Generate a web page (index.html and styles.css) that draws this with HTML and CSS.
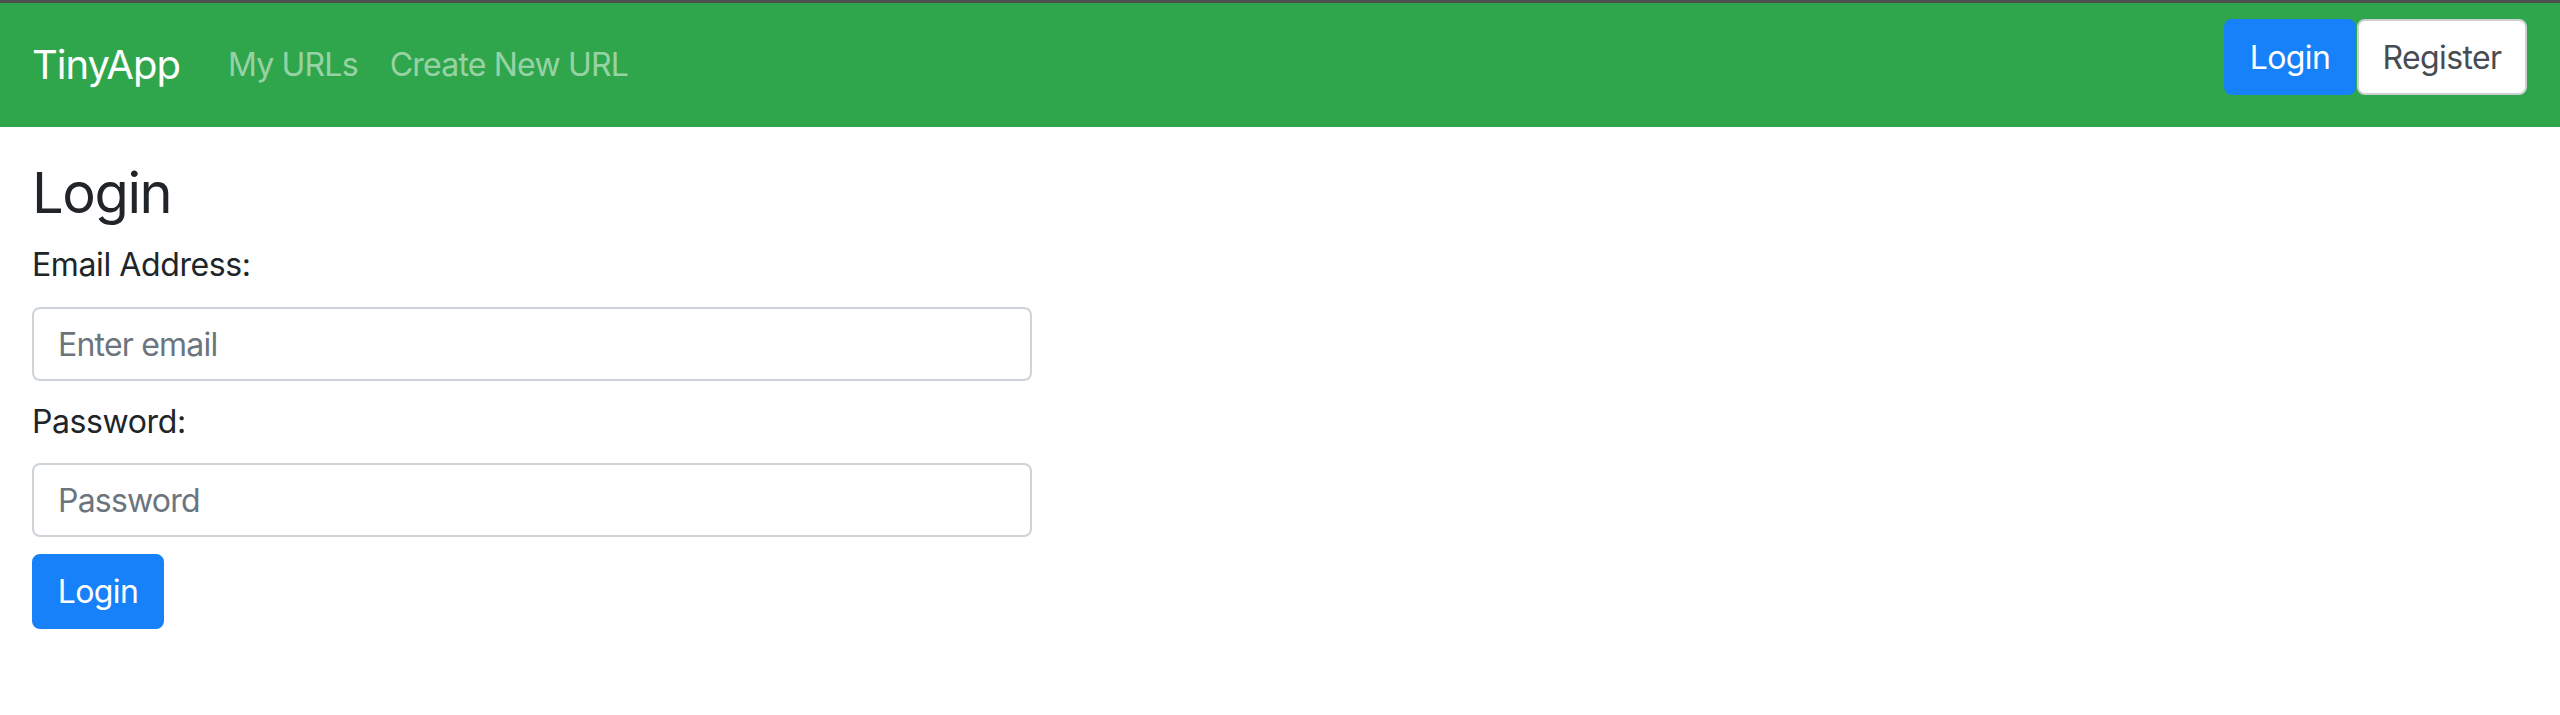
FILE: index.html
```html
<!DOCTYPE html>
<html lang="en">
<head>
<meta charset="utf-8">
<title>TinyApp - Login</title>
<link rel="stylesheet" href="styles.css">
</head>
<body>
<nav class="navbar">
  <a class="brand" href="#">TinyApp</a>
  <div class="nav-links">
    <a class="nav-link" href="#">My URLs</a>
    <a class="nav-link" href="#">Create New URL</a>
  </div>
  <div class="nav-actions">
    <a class="btn btn-primary btn-nav-login" href="#">Login</a>
    <a class="btn btn-light btn-nav-register" href="#">Register</a>
  </div>
</nav>
<main class="content">
  <h1 class="title">Login</h1>
  <form class="login-form">
    <label class="field-label" for="email">Email Address:</label>
    <input class="field-input" id="email" type="email" placeholder="Enter email">
    <label class="field-label field-label-second" for="password">Password:</label>
    <input class="field-input" id="password" type="password" placeholder="Password">
    <button class="btn btn-primary btn-submit" type="submit">Login</button>
  </form>
</main>
</body>
</html>
```
FILE: styles.css
```css
html, body {
  margin: 0;
  padding: 0;
  background: #ffffff;
}
body {
  font-family: Inter, "Liberation Sans", sans-serif;
  color: #212529;
  letter-spacing: -0.025em;
}
a { text-decoration: none; }

.navbar {
  box-sizing: border-box;
  height: 127px;
  border-top: 3px solid #4f4f4f;
  background: #2fa64b;
  display: flex;
  align-items: center;
  padding: 0 33px 0 32px;
}
.brand {
  font-size: 40px;
  color: #ffffff;
  margin-right: 32px;
  line-height: 1;
  letter-spacing: -0.025em;
}
.nav-links {
  display: flex;
}
.nav-link {
  font-size: 32px;
  color: rgba(255, 255, 255, 0.52);
  padding: 0 16px;
  line-height: 1;
  letter-spacing: -0.025em;
}
.nav-actions {
  margin-left: auto;
  margin-bottom: 16px;
  display: flex;
}
.btn {
  box-sizing: border-box;
  display: flex;
  align-items: center;
  justify-content: center;
  font-family: Inter, "Liberation Sans", sans-serif;
  font-size: 32px;
  letter-spacing: -0.02em;
  border-radius: 8px;
  border: 2px solid transparent;
  cursor: pointer;
}
.btn-primary {
  background: #1781fa;
  border-color: #1781fa;
  color: #ffffff;
}
.btn-light {
  background: #ffffff;
  border-color: #cdd0d3;
  color: #474c52;
}
.btn-nav-login {
  width: 132px;
  height: 76px;
  margin-right: 1px;
}
.btn-nav-register {
  width: 170px;
  height: 76px;
}

.content {
  padding: 0 32px;
}
.title {
  font-size: 56px;
  font-weight: 400;
  line-height: 70px;
  margin: 31px 0 13px 0;
  letter-spacing: -0.025em;
}
.login-form {
  display: flex;
  flex-direction: column;
  align-items: flex-start;
}
.field-label {
  font-size: 32px;
  line-height: 48px;
  margin-bottom: 18px;
}
.field-label-second {
  margin-top: 17px;
  margin-bottom: 17px;
}
.field-input {
  box-sizing: border-box;
  width: 1000px;
  height: 74px;
  border: 2px solid #ced4da;
  border-radius: 8px;
  padding: 0 24px;
  font-family: Inter, "Liberation Sans", sans-serif;
  font-size: 32px;
  letter-spacing: -0.025em;
  color: #495057;
  background: #ffffff;
  outline: none;
}
.field-input::placeholder {
  color: #6c757d;
}
.btn-submit {
  margin-top: 17px;
  width: 132px;
  height: 75px;
}
```
